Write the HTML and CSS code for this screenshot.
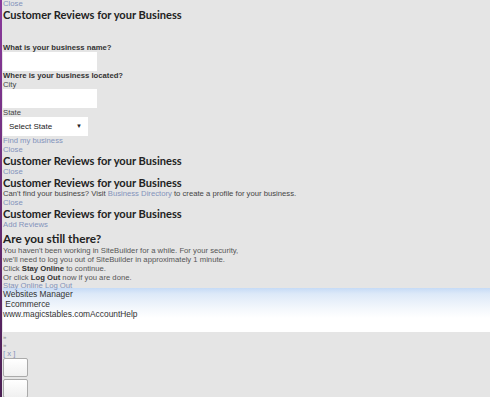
FILE: index.html
```html
<!DOCTYPE html>
<html lang="en">
<head>
    <meta charset="UTF-8">
    <title>Customer Reviews</title>
    <link rel="stylesheet" href="styles.css">
</head>
<body>
    <div class="page">
        <!-- Find business dialog -->
        <div class="dialog">
            <a class="link" href="#">Close</a>
            <h2>Customer Reviews for your Business</h2>
            <div class="spacer"></div>
            <form class="find-form">
                <label class="label-strong" for="bizName">What is your business name?</label>
                <input type="text" id="bizName" class="text-input">
                <div class="label-strong">Where is your business located?</div>
                <label for="city">City</label>
                <input type="text" id="city" class="text-input">
                <label for="state">State</label>
                <div class="select-box" id="state">
                    <span>Select State</span>
                    <span class="arrow">&#9660;</span>
                </div>
                <a class="link" href="#">Find my business</a>
            </form>
        </div>

        <div class="dialog">
            <a class="link" href="#">Close</a>
            <h2>Customer Reviews for your Business</h2>
        </div>

        <div class="dialog">
            <a class="link" href="#">Close</a>
            <h2>Customer Reviews for your Business</h2>
            <p>Can't find your business? Visit <a class="link" href="#">Business Directory</a> to create a profile for your business.</p>
        </div>

        <div class="dialog">
            <a class="link" href="#">Close</a>
            <h2>Customer Reviews for your Business</h2>
            <a class="link" href="#">Add Reviews</a>
        </div>

        <!-- Session timeout -->
        <div class="dialog timeout">
            <h3>Are you still there?</h3>
            <p>You haven't been working in SiteBuilder for a while. For your security,<br>
            we'll need to log you out of SiteBuilder in approximately 1 minute.<br>
            Click <b>Stay Online</b> to continue.<br>
            Or click <b>Log Out</b> now if you are done.</p>
            <div class="actions"><a class="link" href="#">Stay Online</a> <a class="link" href="#">Log Out</a></div>
        </div>

        <div class="header-bar">
            <div>Websites Manager</div>
            <div>&nbsp;Ecommerce</div>
            <div>www.magicstables.comAccountHelp</div>
        </div>

        <div class="tools">
            <div class="raquo">&raquo;</div>
            <div class="raquo">&raquo;</div>
            <a class="link" href="#">[ x ]</a>
            <button class="tool-btn"></button>
            <button class="tool-btn"></button>
        </div>
    </div>
</body>
</html>
```

FILE: styles.css
```css
body {
    margin: 0;
    background: #e5e5e5;
    font-family: "Liberation Sans", Arial, sans-serif;
    font-size: 7.7px;
    line-height: 9px;
    color: #444;
    overflow: hidden;
}
.page {
    min-height: 100vh;
    margin-top: -1px;
    border-left: 2px solid #7b2d8c;
    border-image: linear-gradient(#8a3a9c, #4a1f52) 1;
    padding-left: 1px;
}
.link {
    color: #8393bb;
    text-decoration: none;
}
.dialog > .link {
    display: block;
}
h2 {
    margin: 0;
    font-family: Lato, "Open Sans", sans-serif;
    font-size: 11.1px;
    font-weight: 700;
    line-height: 13px;
    color: #222;
}
h3 {
    margin: 0;
    padding-top: 2px;
    font-family: Lato, "Open Sans", sans-serif;
    font-size: 11.8px;
    font-weight: 700;
    line-height: 15px;
    color: #222;
}
p {
    margin: 0;
}
.spacer {
    height: 22px;
}
.find-form {
    display: flex;
    flex-direction: column;
    align-items: flex-start;
}
.label-strong {
    font-weight: bold;
    color: #333;
}
.text-input {
    width: 94px;
    height: 19px;
    margin: 0;
    padding: 0;
    border: none;
    background: white;
    box-sizing: border-box;
}
.select-box {
    width: 85px;
    height: 19px;
    background: white;
    display: flex;
    align-items: center;
    justify-content: space-between;
    padding: 0 6px;
    box-sizing: border-box;
    color: #222;
    font-size: 8px;
}
.select-box .arrow {
    font-size: 6px;
}
.timeout p {
    color: #555;
}
.timeout b {
    color: #333;
}
.actions {
    line-height: 7px;
}
.header-bar {
    margin-top: -1px;
    height: 44px;
    background: linear-gradient(#c6dbf6 0px, #dde9f8 6px, #f3f7fc 20px, #ffffff 30px);
    font-size: 8.4px;
    line-height: 10px;
    color: #333;
    padding-top: 1px;
    box-sizing: border-box;
}
.tools {
    padding-top: 1px;
    display: flex;
    flex-direction: column;
    align-items: flex-start;
}
.raquo {
    font-size: 6px;
    line-height: 8px;
    color: #888;
}
.tool-btn {
    width: 25px;
    height: 19px;
    margin: 0 0 2px;
    border: 1px solid #aaa;
    border-radius: 2px;
    background: linear-gradient(#ffffff, #f0f0f0);
    padding: 0;
}
```
